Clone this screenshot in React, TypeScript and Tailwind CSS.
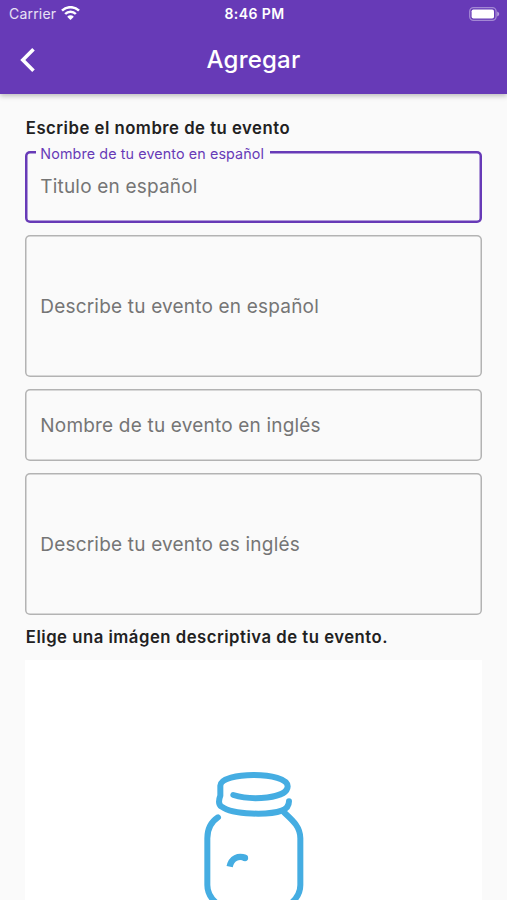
import { clsx } from 'clsx';

type FieldProps = {
  placeholder: string;
  label?: string;
  tall?: boolean;
  focused?: boolean;
};

function WifiIcon() {
  return (
    <svg width="19" height="15" viewBox="0 0 57 45" fill="none" stroke="#fff" strokeWidth="7.5" aria-hidden="true">
      <path d="M3 14C17 0 40 0 54 14" />
      <path d="M12.500 24C21 15 36 15 44.500 24" />
      <path d="M28.500 42l-10-10c6-5.500 14-5.500 20 0z" fill="#fff" stroke="none" />
    </svg>
  );
}

function BatteryIcon() {
  return (
    <svg width="31" height="14" viewBox="0 0 31 14" aria-hidden="true">
      <rect x="0.7" y="0.7" width="26.4" height="12.600" rx="3.800" fill="none" stroke="#fff" strokeOpacity="0.4" strokeWidth="1.3" />
      <rect x="2.600" y="2.500" width="22.400" height="9" rx="1.800" fill="#fff" />
      <path d="M28.200 4.600c1.200.5 2 1.400 2 2.400s-.8 1.900-2 2.400z" fill="#fff" fillOpacity="0.5" />
    </svg>
  );
}

function JarIcon() {
  return (
    <svg
      width="150"
      height="150"
      viewBox="0 0 450 450"
      fill="none"
      stroke="#45ade2"
      strokeWidth="18"
      strokeLinecap="round"
      strokeLinejoin="round"
      aria-hidden="true"
    >
      <path d="M160 135C215 152 322 146 323 109C323 64 122 64 121 107V137C116 150 114 163 125 170C160 196 270 195 305 182C319 177 327 168 327 154" />
      <path d="M114 202C96 214 82 235 82 265V405C82 425 91 443 108 458" />
      <path d="M310 185C338 211 361 230 361 265V405C361 425 352 443 335 458" />
      <path d="M149 350C154 324 176 315 196 324" strokeLinecap="butt" strokeWidth="19" />
      <circle cx="195" cy="324" r="9.500" fill="#45ade2" stroke="none" />
    </svg>
  );
}

function Field({ placeholder, label, tall, focused }: FieldProps) {
  return (
    <div
      className={clsx(
        'relative flex items-center rounded-[5px] px-[15px]',
        tall ? 'h-[142px]' : 'h-[72px]',
        focused ? 'shadow-[inset_0_0_0_2.5px_#673ab7]' : 'pt-[2px] shadow-[inset_0_0_0_1.5px_#b3b3b3]',
      )}
    >
      {label && (
        <span className="absolute -top-[6px] left-[11px] bg-[#fafafa] pr-[6px] pl-[4px] text-[14.300px] leading-[18px] tracking-[0.120px] whitespace-nowrap text-[#673ab7]">
          {label}
        </span>
      )}
      <span className="text-[19px] leading-6 tracking-[0.190px] whitespace-nowrap text-[#757575]">{placeholder}</span>
    </div>
  );
}

export default function App() {
  return (
    <div className="flex h-[900px] w-[507px] flex-col overflow-hidden bg-[#fafafa] font-['Inter',sans-serif]">
      <header className="z-10 h-[94px] shrink-0 bg-[#673ab7] text-white shadow-[0_2px_5px_rgba(0,0,0,0.25)]">
        <div className="grid h-[27px] grid-cols-3 items-center pr-[7px] pl-[9px]">
          <div className="flex items-center gap-[5px] text-[14px] tracking-[0.2px] text-white/85">
            Carrier
            <WifiIcon />
          </div>
          <p className="text-center text-[14px] font-semibold tracking-[0.4px]">8:46 PM</p>
          <div className="flex justify-end">
            <BatteryIcon />
          </div>
        </div>
        <div className="grid h-[66px] grid-cols-[60px_1fr_60px] items-center">
          <button type="button" aria-label="Atrás" className="pl-[20px]">
            <svg width="16" height="26" viewBox="0 0 16 26" fill="none" stroke="#fff" strokeWidth="3.600" aria-hidden="true">
              <path d="M13.500 2.200L2.800 13l10.700 10.800" />
            </svg>
          </button>
          <h1 className="text-center text-[24px] leading-8 font-medium tracking-[0.2px]">Agregar</h1>
        </div>
      </header>

      <main className="flex flex-col px-[25.300px] pt-[24.400px]">
        <h2 className="mb-[12px] pl-[0.5px] text-[16.700px] leading-[21px] font-semibold tracking-[0.510px] whitespace-nowrap text-[#212121]">
          Escribe el nombre de tu evento
        </h2>
        <div className="flex flex-col gap-[12px]">
          <Field focused label="Nombre de tu evento en español" placeholder="Titulo en español" />
          <Field tall placeholder="Describe tu evento en español" />
          <Field placeholder="Nombre de tu evento en inglés" />
          <Field tall placeholder="Describe tu evento es inglés" />
        </div>
        <h2 className="mt-[12px] mb-[12px] pl-[0.5px] text-[16.700px] leading-[21px] font-semibold tracking-[0.510px] whitespace-nowrap text-[#212121]">
          Elige una imágen descriptiva de tu evento.
        </h2>
        <div className="flex h-[457px] justify-center bg-white pt-[90px] pl-[3px]">
          <JarIcon />
        </div>
      </main>
    </div>
  );
}
